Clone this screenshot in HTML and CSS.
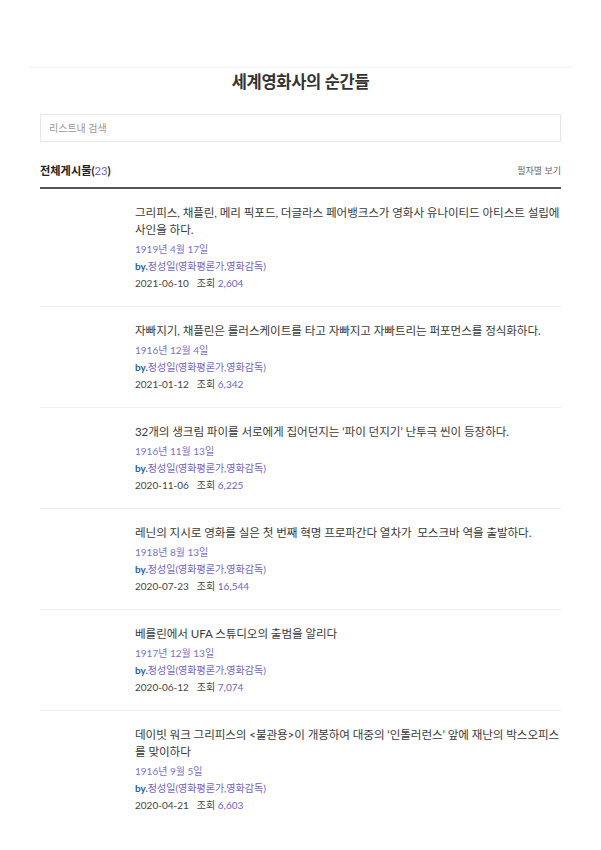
FILE: index.html
```html
<!DOCTYPE html>
<html>
  <head>
    <meta charset="utf-8" />
    <title>세계영화사의 순간들</title>
    <meta name="viewport" content="width=device-width, initial-scale=1" />
    <link rel="stylesheet" href="styles.css">
  </head>

  <body>
    <div class="wrap">
      <h1 class="page-title">세계영화사의 순간들</h1>

      <div class="list">
        <div class="search">
          <input type="text" class="search-input" placeholder="리스트내 검색" />
        </div>

        <div class="list-head">
          <span class="total">전체게시물(<em>23</em>)</span>
          <a class="by-writer" href="#">필자별 보기</a>
        </div>

        <ul class="posts">
          <li class="post">
            <p class="post-title">그리피스, 채플린, 메리 픽포드, 더글라스 페어뱅크스가 영화사 유나이티드 아티스트 설립에 사인을 하다.</p>
            <p class="post-date">1919년 4월 17일</p>
            <p class="post-author"><b>by.</b>정성일(영화평론가,영화감독)</p>
            <p class="post-meta"><span class="day">2021-06-10</span>조회 <em>2,604</em></p>
          </li>
          <li class="post">
            <p class="post-title">자빠지기, 채플린은 롤러스케이트를 타고 자빠지고 자빠트리는 퍼포먼스를 정식화하다.</p>
            <p class="post-date">1916년 12월 4일</p>
            <p class="post-author"><b>by.</b>정성일(영화평론가,영화감독)</p>
            <p class="post-meta"><span class="day">2021-01-12</span>조회 <em>6,342</em></p>
          </li>
          <li class="post">
            <p class="post-title">32개의 생크림 파이를 서로에게 집어던지는 ‘파이 던지기’ 난투극 씬이 등장하다.</p>
            <p class="post-date">1916년 11월 13일</p>
            <p class="post-author"><b>by.</b>정성일(영화평론가,영화감독)</p>
            <p class="post-meta"><span class="day">2020-11-06</span>조회 <em>6,225</em></p>
          </li>
          <li class="post">
            <p class="post-title">레닌의 지시로 영화를 실은 첫 번째 혁명 프로파간다 열차가&nbsp; 모스크바 역을 출발하다.</p>
            <p class="post-date">1918년 8월 13일</p>
            <p class="post-author"><b>by.</b>정성일(영화평론가,영화감독)</p>
            <p class="post-meta"><span class="day">2020-07-23</span>조회 <em>16,544</em></p>
          </li>
          <li class="post">
            <p class="post-title">베를린에서 UFA 스튜디오의 출범을 알리다</p>
            <p class="post-date">1917년 12월 13일</p>
            <p class="post-author"><b>by.</b>정성일(영화평론가,영화감독)</p>
            <p class="post-meta"><span class="day">2020-06-12</span>조회 <em>7,074</em></p>
          </li>
          <li class="post">
            <p class="post-title">데이빗 워크 그리피스의 &lt;불관용&gt;이 개봉하여 대중의 ‘인톨러런스’ 앞에 재난의 박스오피스를 맞이하다</p>
            <p class="post-date">1916년 9월 5일</p>
            <p class="post-author"><b>by.</b>정성일(영화평론가,영화감독)</p>
            <p class="post-meta"><span class="day">2020-04-21</span>조회 <em>6,603</em></p>
          </li>
        </ul>
      </div>
    </div>
  </body>
</html>
```

FILE: styles.css
```css
body {
  margin: 0;
  background: #fff;
  color: #333;
  font-family: Lato, "Noto Sans CJK KR", sans-serif;
}

p {
  margin: 0;
}

em {
  font-style: normal;
  color: #6f63c6;
}

.wrap {
  width: 543px;
  margin: 67px auto 0;
  border-top: 1px solid #f2f2f2;
}

.page-title {
  margin: 0;
  padding-top: 2px;
  text-align: center;
  font-size: 16.5px;
  line-height: 24px;
  font-weight: 700;
  letter-spacing: -0.3px;
  color: #333;
}

.list {
  margin: 0 11px;
}

.search {
  margin-top: 20px;
}

.search-input {
  display: block;
  box-sizing: border-box;
  width: 100%;
  height: 28px;
  padding: 0 8px;
  border: 1px solid #e6e6e6;
  font-family: inherit;
  font-size: 10px;
  color: #333;
  outline: none;
}

.search-input::placeholder {
  color: #999;
}

.list-head {
  display: flex;
  justify-content: space-between;
  align-items: center;
  margin-top: 20px;
  padding-bottom: 8px;
  border-bottom: 2px solid #555;
  line-height: 17px;
}

.total {
  font-size: 11.2px;
  font-weight: 700;
  color: #222;
}

.total em {
  font-weight: 400;
}

.by-writer {
  font-size: 9px;
  color: #666;
  text-decoration: none;
}

.posts {
  list-style: none;
  margin: 0;
  padding: 0;
}

.post {
  padding: 15px 0 14px 95px;
  border-bottom: 1px solid #f0f0f0;
}

.post:last-child {
  border-bottom: none;
}

.post-title {
  font-size: 11.6px;
  line-height: 17px;
  letter-spacing: -0.1px;
  color: #3a3a3a;
}

.post-date {
  margin-top: 3px;
  font-size: 10px;
  line-height: 17px;
  color: #7b6fd0;
}

.post-author {
  font-size: 10px;
  line-height: 17px;
  color: #6f63c6;
}

.post-author b {
  color: #1f5fae;
}

.post-meta {
  font-size: 10px;
  line-height: 17px;
  color: #444;
}

.post-meta .day {
  margin-right: 8px;
}
```
